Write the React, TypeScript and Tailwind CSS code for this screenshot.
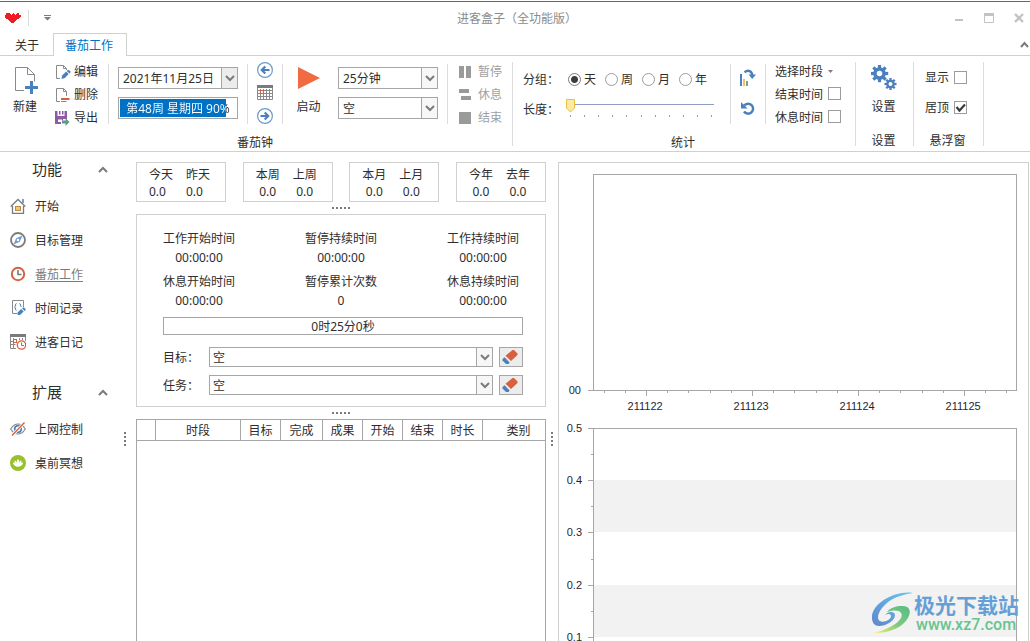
import { useState, type ReactNode } from "react";

const BLUE = "#4a80bb";
const ORANGE = "#d9603f";
const GREY = "#7b7b7b";

function Svg({ w, h, children, className = "" }: { w: number; h: number; children: ReactNode; className?: string }) {
  return (
    <svg width={w} height={h} viewBox={`0 0 ${w} ${h}`} fill="none" aria-hidden="true" className={`shrink-0 ${className}`}>
      {children}
    </svg>
  );
}

/* ---------- icons ---------- */

const HeartLogo = () => (
  <Svg w={16} h={11}>
    <path
      fill="#ee1c25"
      d="M3 1h2v1h1v1h1v-1h1v-1h1v1h1v1h1v-1h1v-1h2v2h2v2h-1v1h-1v1h-2v1h-1v1h-1v1h-1v1h-3v-1h-1v-1h-1v-1h-1v-1h-2v-1h-1v-1h-1v-2h2v-2z"
    />
  </Svg>
);

const Chevron = ({ up = false, w = 10 }: { up?: boolean; w?: number }) => (
  <Svg w={w} h={7}>
    <path
      d={up ? `M1 6 L${w / 2} 2 L${w - 1} 6` : `M1 1 L${w / 2} 5 L${w - 1} 1`}
      stroke={GREY}
      strokeWidth="2"
    />
  </Svg>
);

const NewIcon = () => (
  <Svg w={28} h={28}>
    <path d="M13 23.500H4.500V.5h12l7 7v7M16.500.5v7h7" stroke="#8a8a8a" />
    <path d="M20.500 14v13M14 20.500h13" stroke={BLUE} strokeWidth="3" />
  </Svg>
);

const EditIcon = () => (
  <Svg w={16} h={16}>
    <path d="M5 14.500H1.500V1.500h7l3 3V6M8.500 1.500v3h3" stroke="#8a8a8a" />
    <path d="M6.500 15l.6-3.600 4-3.900 2.600 2.500-3.900 4z" fill={BLUE} />
    <path d="M11.800 6.900l1-.9h1.200l1.400 1.400v1.200l-1 1z" fill={BLUE} />
  </Svg>
);

const DeleteIcon = () => (
  <Svg w={16} h={16}>
    <path d="M5 14.500H1.500V1.500h7l3 3V9M8.500 1.500v3h3M6 14.500h5.500" stroke="#8a8a8a" />
    <path d="M6 12h8.500" stroke={ORANGE} strokeWidth="2" />
  </Svg>
);

const ExportIcon = () => (
  <Svg w={16} h={16}>
    <path fill="#8d5aa9" d="M0 1h2.500v5h7V1H12v8H8v1.500H7V9.500H3V12h3v2H0z M4 1h1.500v3.500H4z M7 1h1.500v3.500H7z" />
    <path fill="#5e9e86" d="M7 10.500h3.500V8L14.500 12l-4 4v-2.500H7z" />
  </Svg>
);

const CircleArrow = ({ left = false }: { left?: boolean }) => (
  <Svg w={16} h={16} className={left ? "" : "rotate-180"}>
    <circle cx="8" cy="8" r="7.400" stroke="#6e9bca" strokeWidth="1.200" />
    <path d="M12.500 8H5M8.300 4.500L4.800 8l3.500 3.500" stroke={BLUE} strokeWidth="2.200" />
  </Svg>
);

const CalendarIcon = () => (
  <Svg w={16} h={15}>
    <path fill="#7b7b7b" d="M0 0h16v3H0z" />
    <path d="M.5 3v11.500h15V3M.5 8.500h15M.5 11.500h15M3.500 4v11M6.500 4v11M9.500 4v11M12.500 4v11M.5 5.500h15" stroke="#8a8a8a" />
    <rect x="3.500" y="5.500" width="3" height="3" fill="#fff" stroke={ORANGE} />
  </Svg>
);

const PlayIcon = () => (
  <Svg w={22} h={22}>
    <path d="M0 0l22 11L0 22z" fill="#f06a42" />
  </Svg>
);

const PauseIcon = () => (
  <Svg w={12} h={12}>
    <path d="M0 0h5v12H0zM7 0h5v12H7z" fill="#9a9a9a" />
  </Svg>
);
const RestIcon = () => (
  <Svg w={12} h={12}>
    <path d="M0 0h10v4H0zM2 7h10v4H2z" fill="#9a9a9a" />
  </Svg>
);
const StopIcon = () => (
  <Svg w={12} h={12}>
    <path d="M0 0h12v12H0z" fill="#9a9a9a" />
  </Svg>
);

const ChartRotateIcon = () => (
  <Svg w={16} h={17}>
    <path d="M1 5v12" stroke={BLUE} strokeWidth="2" />
    <path d="M4 10v7" stroke="#f2c063" strokeWidth="2" />
    <path d="M7 12v5" stroke="#6fa58d" strokeWidth="2" />
    <path d="M4.500 3.300C8 .3 12 2 12.300 6.500" stroke={BLUE} strokeWidth="2.400" />
    <path d="M8.500 5.500H16L12.200 10z" fill={BLUE} />
  </Svg>
);

const UndoIcon = () => (
  <Svg w={14} h={13}>
    <path d="M3.200 3.500A5 5 0 1 1 3 9.500" stroke={BLUE} strokeWidth="2.500" />
    <path d="M0 0v6.500h6.500z" fill={BLUE} />
  </Svg>
);

function Gear({ cx, cy, r, hole, teeth }: { cx: number; cy: number; r: number; hole: number; teeth: number }) {
  return (
    <g transform={`translate(${cx} ${cy})`}>
      {Array.from({ length: 8 }, (_, i) => (
        <rect key={i} x={-teeth / 2} y={-r - teeth * 0.75} width={teeth} height={teeth * 1.5} fill={BLUE} transform={`rotate(${i * 45})`} />
      ))}
      <circle r={(r + hole) / 2} stroke={BLUE} strokeWidth={r - hole} />
    </g>
  );
}

const GearsIcon = () => (
  <Svg w={26} h={26} className="-mt-0.5">
    <Gear cx={8.500} cy={8.500} r={6.300} hole={2.800} teeth={3.200} />
    <Gear cx={19.500} cy={19} r={4.300} hole={2} teeth={2.300} />
  </Svg>
);

const EraserIcon = () => (
  <Svg w={16} h={14}>
    <path d="M10.500 0h1.500l3.500 3.500V5L9 11 3.500 5.800z" fill={ORANGE} />
    <path d="M2.600 7.200l5 5.300L6.500 14H4L.5 10.500V9z" fill={BLUE} />
  </Svg>
);

const HomeIcon = () => (
  <Svg w={16} h={16}>
    <path d="M13 1v4" stroke={BLUE} strokeWidth="1.500" />
    <path d="M.7 8.500L8 1.500l7.300 7M2.500 8v7.500h11V8" stroke="#7b7b7b" strokeWidth="1.300" />
    <rect x="5.500" y="8.500" width="5" height="4" fill="#f3c670" stroke="#b98c4a" />
  </Svg>
);
const CompassIcon = () => (
  <Svg w={16} h={16}>
    <circle cx="8" cy="8" r="7" stroke="#7b7b7b" strokeWidth="1.800" />
    <path d="M12.500 3.500L9.800 9.800 3.500 12.500 6.200 6.200z" fill="#6f9bcb" />
    <circle cx="8" cy="8" r="1.300" fill="#fff" />
  </Svg>
);
const ClockIcon = () => (
  <Svg w={16} h={16}>
    <circle cx="8" cy="8" r="6.200" stroke={ORANGE} strokeWidth="2" />
    <path d="M8 4v4.500h3.500" stroke="#7b7b7b" strokeWidth="1.600" />
  </Svg>
);
const RecordIcon = () => (
  <Svg w={16} h={16}>
    <path d="M7 13.500H2.500V.5h11V7" stroke="#8a8a8a" />
    <path d="M6.500 3.500c-1.500 0-.5 2.800-2 3.500 1.500.7.500 3.500 2 3.500M9.500 3.500c1.500 0 .5 2.800 2 3.500" stroke={BLUE} />
    <path d="M7.500 12.500l3.700-3.500 2.500 2.500L10 15H7.500z" fill={BLUE} />
    <path d="M12 8.300l1-.8h1l1.600 1.500v1l-1 1z" fill={BLUE} />
  </Svg>
);
const DiaryIcon = () => (
  <Svg w={16} h={16}>
    <path d="M0 0h16v3H0z" fill="#7b7b7b" />
    <path d="M.5 3v11.500H6M.5 7.500h5M.5 10.500h5M3.500 4v10.500M9.500 4v2M12.500 4v2M15.500 3v4" stroke="#8a8a8a" />
    <rect x="3.500" y="5.500" width="3" height="3" fill="#fff" stroke={ORANGE} />
    <circle cx="11.500" cy="11" r="4.200" fill="#fff" stroke={ORANGE} strokeWidth="1.300" />
    <path d="M11.500 8.500V11.500H14" stroke="#7b7b7b" />
  </Svg>
);
const EyeOffIcon = () => (
  <Svg w={16} h={14}>
    <path d="M.7 7C3 3.200 5.500 2 8 2s5 1.200 7.300 5C13 10.800 10.500 12 8 12S3 10.800.7 7z" stroke="#8a8a8a" strokeWidth="1.200" />
    <circle cx="8" cy="7" r="3.300" stroke={BLUE} strokeWidth="1.800" />
    <path d="M2 13.500L14.500.5" stroke="#fff" strokeWidth="3" />
    <path d="M2 13.500L14.500.5" stroke={ORANGE} strokeWidth="1.400" />
  </Svg>
);
const LotusIcon = () => (
  <Svg w={16} h={16}>
    <circle cx="8" cy="8" r="8" fill="#97c02c" />
    <path
      d="M8 4c1.300 1.200 1.600 3 1.200 4.500.4-1.500 1-2.500 2-3.200.5 1.200.3 2.300-.1 3.100.6-.7 1.300-1 2-.9-.2 2.500-2.500 4.300-5.100 4.300S3.100 10 2.900 7.500c.7-.1 1.400.2 2 .9-.4-.8-.6-1.900-.1-3.100 1 .7 1.600 1.700 2 3.200C6.400 7 6.700 5.200 8 4z"
      fill="#fff"
    />
  </Svg>
);

/* ---------- building blocks ---------- */

function Combo({ label, value, wide = false, shaded = false }: { label: string; value: string; wide?: boolean; shaded?: boolean }) {
  return (
    <div className={`relative border border-[#a6a6a6] bg-white ${wide ? "h-5 min-w-0 flex-1" : "h-[22px]"}`}>
      <select
        aria-label={label}
        className={`block h-full w-full appearance-none bg-transparent pt-px pr-4 outline-none ${wide ? "pl-[3px]" : "pl-1"}`}
      >
        <option>{value}</option>
      </select>
      <span
        className={`pointer-events-none absolute inset-y-0 right-0 flex w-4 items-center justify-center border-l border-[#a6a6a6] ${
          shaded ? "bg-[#ececec]" : "bg-[#f7f7f7]"
        }`}
      >
        <Chevron />
      </span>
    </div>
  );
}

function Check({ defaultChecked = false, children }: { defaultChecked?: boolean; children: ReactNode }) {
  return (
    <label className="flex items-center gap-[5px]">
      {children}
      <span className="grid pb-0.5">
        <input
          type="checkbox"
          defaultChecked={defaultChecked}
          className="peer col-start-1 row-start-1 size-[13px] appearance-none border border-[#9c9c9c] bg-white"
        />
        <svg
          viewBox="0 0 13 13"
          fill="none"
          aria-hidden="true"
          className="pointer-events-none invisible col-start-1 row-start-1 size-[13px] peer-checked:visible"
        >
          <path d="M2.500 6l3 3.500L11 3.500" stroke="#3c3c3c" strokeWidth="2.200" />
        </svg>
      </span>
    </label>
  );
}

const ShortRule = () => <div className="mt-1 h-[60px] w-px bg-[#dcdcdc]" />;
const TallRule = () => <div className="mt-1.5 h-[84px] w-px bg-[#dcdcdc]" />;

function Group({ title, className = "", children }: { title: string; className?: string; children: ReactNode }) {
  return (
    <section className={`flex flex-col pt-1 ${className}`}>
      <div className="flex h-[69px] items-start">{children}</div>
      <h2 className="mt-1 pr-0.5 text-center leading-5">{title}</h2>
    </section>
  );
}

function SmallButton({ icon, children, disabled = false }: { icon: ReactNode; children: ReactNode; disabled?: boolean }) {
  return (
    <button type="button" disabled={disabled} className="flex h-[23px] items-center disabled:text-[#a0a0a0]">
      {icon}
      <span>{children}</span>
    </button>
  );
}

function BigButton({ icon, children, className = "" }: { icon: ReactNode; children: ReactNode; className?: string }) {
  return (
    <button type="button" className={`flex flex-col items-center pt-[7px] ${className}`}>
      <span className="flex h-[30px] justify-center">{icon}</span>
      <span className="leading-5">{children}</span>
    </button>
  );
}

const Dots = ({ vertical = false }: { vertical?: boolean }) => (
  <div className={`flex items-center justify-center gap-[2px] ${vertical ? "flex-col" : "h-3"}`}>
    {[0, 1, 2, 3, ...(vertical ? [] : [4])].map((i) => (
      <span key={i} className="size-[2px] bg-[#7b7b7b]" />
    ))}
  </div>
);

function LengthSlider() {
  const [value, setValue] = useState(0);
  return (
    <div className="relative h-5 w-[150px]">
      <svg width="150" height="20" fill="none" aria-hidden="true">
        <path d="M4 5.500h144" stroke="#8d9dc4" />
        {Array.from({ length: 11 }, (_, i) => (
          <rect key={i} x={4 + Math.round(i * 14.1)} y="16" width="1" height="2" fill="#8d9dc4" />
        ))}
        <path
          d="M.5 .5h8v8.500l-4 4-4-4z"
          fill="#fbe9a8"
          stroke="#e9bf3b"
          transform={`translate(${value * 14.1} 0)`}
        />
      </svg>
      <input
        id="length"
        type="range"
        min={0}
        max={10}
        value={value}
        onChange={(e) => setValue(Number(e.target.value))}
        className="absolute inset-0 w-full opacity-0"
      />
    </div>
  );
}

/* ---------- ribbon ---------- */

function Ribbon() {
  return (
    <div className="flex h-24 shrink-0 border-b border-[#d0d0d0]">
      <Group title="番茄钟" className="w-[512px]">
        <BigButton icon={<NewIcon />} className="w-[50px]">新建</BigButton>
        <div className="flex w-[58px] flex-col pl-[5px] [&_span]:pl-[3px]">
          <SmallButton icon={<EditIcon />}>编辑</SmallButton>
          <SmallButton icon={<DeleteIcon />}>删除</SmallButton>
          <SmallButton icon={<ExportIcon />}>导出</SmallButton>
        </div>
        <ShortRule />
        <div className="flex w-[138px] flex-col gap-2 pt-[7px] pr-[9px] pl-[9px]">
          <Combo label="日期" value="2021年11月25日" shaded />
          <div
            role="progressbar"
            aria-label="周进度"
            aria-valuenow={90}
            className="h-[22px] border border-[#a6a6a6] bg-white p-px"
          >
            <div className="h-full bg-[linear-gradient(90deg,#0072c6_91%,transparent_91%)]">
              <div className="bg-[linear-gradient(90deg,#fff_91%,#333_91%)] bg-clip-text text-center leading-5 whitespace-nowrap text-transparent">
                第48周 星期四 90%
              </div>
            </div>
          </div>
        </div>
        <ShortRule />
        <div className="flex w-[34px] flex-col items-center">
          <button type="button" aria-label="前一天" className="flex h-[23px] items-start pt-0.5"><CircleArrow left /></button>
          <button type="button" aria-label="日历" className="flex h-[23px] items-start pt-0.5"><CalendarIcon /></button>
          <button type="button" aria-label="后一天" className="flex h-[23px] items-start pt-0.5"><CircleArrow /></button>
        </div>
        <ShortRule />
        <BigButton icon={<PlayIcon />} className="w-[51px]">启动</BigButton>
        <div className="flex w-[113px] flex-col gap-2 pt-[7px] pr-[9px] pl-1">
          <Combo label="时长" value="25分钟" />
          <Combo label="任务" value="空" />
        </div>
        <ShortRule />
        <div className="flex w-[64px] flex-col pl-[11px] [&_span]:pl-[7px]">
          <SmallButton disabled icon={<PauseIcon />}>暂停</SmallButton>
          <SmallButton disabled icon={<RestIcon />}>休息</SmallButton>
          <SmallButton disabled icon={<StopIcon />}>结束</SmallButton>
        </div>
      </Group>
      <TallRule />
      <Group title="统计" className="w-[342px]">
        <div className="flex w-[217px] flex-col gap-3 pt-[9px] pl-[10px] leading-[18px]">
          <fieldset className="flex h-[18px] items-center">
            <legend className="float-left w-[45px] pt-0.5">分组：</legend>
            {["天", "周", "月", "年"].map((unit, i) => (
              <label key={unit} className="flex w-[37px] items-center gap-[3px]">
                <input
                  type="radio"
                  name="unit"
                  defaultChecked={i === 0}
                  className="size-[13px] appearance-none rounded-full border border-[#9c9c9c] bg-white checked:border-[#7b7b7b] checked:bg-[radial-gradient(circle,#3c3c3c_3px,transparent_4px)]"
                />
                <span className="pt-0.5">{unit}</span>
              </label>
            ))}
          </fieldset>
          <div className="flex h-[20px]">
            <label htmlFor="length" className="w-[43px] pt-0.5">长度：</label>
            <LengthSlider />
          </div>
        </div>
        <ShortRule />
        <div className="flex w-[34px] flex-col items-center gap-4 pt-[9px]">
          <button type="button" aria-label="图表刷新"><ChartRotateIcon /></button>
          <button type="button" aria-label="重置"><UndoIcon /></button>
        </div>
        <ShortRule />
        <div className="flex flex-col pl-[9px] [&>*]:h-[23px]">
          <button type="button" className="flex items-center gap-[5px]">
            选择时段
            <Svg w={6} h={4}><path d="M0 0h5L2.500 3z" fill="#7b7b7b" /></Svg>
          </button>
          <Check>结束时间</Check>
          <Check>休息时间</Check>
        </div>
      </Group>
      <TallRule />
      <Group title="设置" className="w-[57px]">
        <BigButton icon={<GearsIcon />} className="w-full pr-0.5">设置</BigButton>
      </Group>
      <TallRule />
      <Group title="悬浮窗" className="w-[69px]">
        <div className="flex flex-col gap-3 pt-[9px] pl-[11px] leading-[18px]">
          <Check>显示</Check>
          <Check defaultChecked>居顶</Check>
        </div>
      </Group>
      <TallRule />
    </div>
  );
}

/* ---------- side navigation ---------- */

function NavSection({ title, items }: { title: string; items: { icon: ReactNode; text: string; active?: boolean }[] }) {
  return (
    <section className="mb-4">
      <button type="button" className="mb-[3px] flex h-[34px] w-full items-center justify-between pr-[14px] pl-[32px] text-[15px]">
        {title}
        <Chevron up />
      </button>
      <ul>
        {items.map((it) => (
          <li key={it.text}>
            <a
              href="#"
              className={`flex h-[34px] items-center gap-[9px] pl-[10px] ${it.active ? "text-[#7b7b7b] underline underline-offset-2" : ""}`}
            >
              {it.icon}
              <span className="pt-0.5">{it.text}</span>
            </a>
          </li>
        ))}
      </ul>
    </section>
  );
}

/* ---------- work panel ---------- */

const totals = [
  ["今天", "昨天"],
  ["本周", "上周"],
  ["本月", "上月"],
  ["今年", "去年"],
];

const timers = [
  ["工作开始时间", "00:00:00"],
  ["暂停持续时间", "00:00:00"],
  ["工作持续时间", "00:00:00"],
  ["休息开始时间", "00:00:00"],
  ["暂停累计次数", "0"],
  ["休息持续时间", "00:00:00"],
];

function WorkPanel() {
  return (
    <div className="flex w-[410px] shrink-0 flex-col pt-[10px]">
      <div className="flex justify-between">
        {totals.map((pair, i) => (
          <dl key={pair[0]} className="flex h-10 w-[90px] gap-[13px] border border-[#d0d0d0] px-3 pt-[3px] leading-[17px]">
            {pair.map((name) => (
              <div key={name} className={`w-6 ${i === 0 ? "" : "text-center"}`}>
                <dt>{name}</dt>
                <dd>0.0</dd>
              </div>
            ))}
          </dl>
        ))}
      </div>
      <Dots />
      <div className="border border-[#d0d0d0] pt-[14px] pr-[22px] pb-[11px] pl-[26px]">
        <dl className="grid grid-cols-[72px_72px_72px] justify-between gap-y-[5px] pr-1 text-center">
          {timers.map(([name, value]) => (
            <div key={name}>
              <dt className="leading-5">{name}</dt>
              <dd className="leading-[18px]">{value}</dd>
            </div>
          ))}
        </dl>
        <div className="mt-[7px] h-[18px] border border-[#a6a6a6] text-center leading-[18px]">0时25分0秒</div>
        <div className="mt-3 flex flex-col gap-2">
          {["目标", "任务"].map((name) => (
            <div key={name} className="flex items-center">
              <span className="w-[46px] pt-0.5">{name}：</span>
              <Combo label={name} value="空" wide />
              <button
                type="button"
                aria-label={`清除${name}`}
                className="ml-1.5 flex h-5 w-6 items-center justify-center border border-[#a6a6a6] bg-[#ececec] pr-0.5"
              >
                <EraserIcon />
              </button>
            </div>
          ))}
        </div>
      </div>
      <Dots />
      <div className="flex-1 overflow-hidden border border-b-0 border-[#a6a6a6]">
        <table className="w-[calc(100%+10px)] table-fixed border-separate border-spacing-0">
          <thead>
            <tr className="[&>th]:h-[21px] [&>th]:border-r [&>th]:border-b [&>th]:border-[#a6a6a6] [&>th]:p-0 [&>th]:pt-0.5 [&>th]:leading-[18px] [&>th]:font-normal">
              <th className="w-[19px]" aria-label="选择" />
              <th className="w-[85px]">时段</th>
              <th className="w-[40px]">目标</th>
              <th className="w-[42px]">完成</th>
              <th className="w-[40px]">成果</th>
              <th className="w-[40px]">开始</th>
              <th className="w-[40px]">结束</th>
              <th className="w-[40px]">时长</th>
              <th>类别</th>
            </tr>
          </thead>
          <tbody />
        </table>
      </div>
    </div>
  );
}

/* ---------- charts ---------- */

const AXIS = "#a6a6a6";
const days = ["211122", "211123", "211124", "211125"];

function DayAxis({ y }: { y: number }) {
  return (
    <>
      {Array.from({ length: 20 }, (_, i) => (
        <rect key={i} x={`${2.5 + i * 5}%`} y={y} width="1" height={i % 5 === 2 ? 5 : 2} fill={AXIS} />
      ))}
      {days.map((d, i) => (
        <text key={d} x={`${12.3 + i * 25}%`} y={y + 19} textAnchor="middle" fill="#1f1f33">
          {d}
        </text>
      ))}
    </>
  );
}

function Frame({ height }: { height: number }) {
  return (
    <>
      <rect width="100%" height="1" fill={AXIS} />
      <rect y={height - 1} width="100%" height="1" fill={AXIS} />
      <rect width="1" height={height} fill={AXIS} />
      <svg x="100%" overflow="visible">
        <rect x="-1" width="1" height={height} fill={AXIS} />
      </svg>
    </>
  );
}

function Charts() {
  const step = 52.2;
  return (
    <div className="mt-[10px] mr-px min-w-0 flex-1 overflow-hidden border border-b-0 border-[#d0d0d0] pt-[11px] pr-[11px] pl-[34px] text-[11px] [font-family:'Liberation_Sans',sans-serif]">
      <svg className="block h-[217px] w-full overflow-visible" shapeRendering="crispEdges" role="img" aria-label="每日时段">
        <Frame height={217} />
        <rect x="-5" y="216" width="5" height="1" fill={AXIS} />
        <text x="-12" y="220" textAnchor="end" fill="#1f1f33">00</text>
        <DayAxis y={217} />
      </svg>
      <svg className="mt-[37px] block h-[262px] w-full overflow-visible" shapeRendering="crispEdges" role="img" aria-label="每日时长">
        <rect y={step} width="100%" height={step} fill="#f2f2f2" />
        <rect y={step * 3} width="100%" height={step} fill="#f2f2f2" />
        <Frame height={262} />
        {["0.5", "0.4", "0.3", "0.2", "0.1"].map((v, i) => (
          <g key={v}>
            <rect x="-5" y={Math.round(i * step)} width="5" height="1" fill={AXIS} />
            <rect x="-2" y={Math.round((i + 0.5) * step)} width="2" height="1" fill={AXIS} />
            <text x="-11" y={Math.round(i * step) + 4} textAnchor="end" fill="#1f1f33">{v}</text>
          </g>
        ))}
      </svg>
    </div>
  );
}

function Watermark() {
  return (
    <div className="absolute right-[11px] bottom-[5px] flex items-center">
      <svg width="43" height="44" viewBox="0 0 43 44" fill="none" aria-hidden="true">
        <defs>
          <linearGradient id="wmBlue" x1="0" y1="1" x2="1" y2="0">
            <stop offset="0" stopColor="#5f86c9" />
            <stop offset="1" stopColor="#66c8f2" />
          </linearGradient>
          <linearGradient id="wmGreen" x1="0" y1="1" x2="1" y2="0">
            <stop offset="0" stopColor="#f4ee6a" />
            <stop offset=".5" stopColor="#7cc97f" />
            <stop offset="1" stopColor="#55bd86" />
          </linearGradient>
        </defs>
        <path
          d="M42 1C24-2 0 12 1 26c0 5 3 8 7 8 7 0 16-5 16-11 0-4-7-4-10 0 4-2 6-1 6 1 0 4-8 7-11 5C4 26 9 15 20 8 27 4 34 2 42 1z"
          fill="url(#wmBlue)"
        />
        <path d="M16 20c4-6 16-7 20-5 7 4 0 17-12 22-7 3-14 4-21 4 11-3 23-8 27-15 3-6-3-10-14-6z" fill="url(#wmGreen)" />
      </svg>
      <div>
        <div className="text-[21px] leading-[22px] font-bold text-[#669fd6] [font-family:'Noto_Sans_CJK_SC',sans-serif]">极光下载站</div>
        <div className="pl-0.5 text-[16px] leading-[20px] font-medium text-[#67c48e] [font-family:Roboto,sans-serif]">www.xz7.com</div>
      </div>
    </div>
  );
}

export default function App() {
  return (
    <div className="relative flex h-screen flex-col overflow-hidden bg-white pt-px text-[12px] text-[#2e2e2e] [font-family:'Noto_Sans','Noto_Sans_CJK_SC',sans-serif]">
      <header className="shrink-0 border-t border-[#666]">
        <div className="grid h-[31px] grid-cols-[1fr_auto_1fr] items-center">
          <div className="flex items-center pl-[5px]">
            <HeartLogo />
            <span className="ml-[7px] h-4 w-px bg-[#dcdcdc]" />
            <button type="button" aria-label="自定义快速访问工具栏" className="ml-[15px]">
              <Svg w={7} h={6}><path d="M0 0h7v1H0zM0 2h7L3.500 5.500z" fill="#7b7b7b" /></Svg>
            </button>
          </div>
          <h1 className="pt-0.5 pl-1 text-[#8c8c8c]">进客盒子（全功能版）</h1>
          <div className="flex items-center justify-end gap-5 pr-[6px]">
            <button type="button" aria-label="最小化"><Svg w={9} h={10}><path d="M0 6h8v2H0z" fill="#c3c3c3" /></Svg></button>
            <button type="button" aria-label="最大化"><Svg w={10} h={10}><path d="M.5 .5h9v9h-9z" stroke="#c3c3c3" /><path d="M0 0h10v3H0z" fill="#c3c3c3" /></Svg></button>
            <button type="button" aria-label="关闭"><Svg w={10} h={10}><path d="M1 1l8 8M9 1L1 9" stroke="#c3c3c3" strokeWidth="2.400" /></Svg></button>
          </div>
        </div>
        <nav className="flex h-[23px] border-b border-[#d0d0d0]">
          <button type="button" className="w-[53px] pt-1 pl-px">关于</button>
          <button type="button" className="-mb-px w-[74px] border border-b-0 border-[#d0d0d0] bg-white pt-0.5 pr-0.5 text-[#0072c6]">番茄工作</button>
          <button type="button" aria-label="折叠功能区" className="mr-px ml-auto"><Chevron up w={9} /></button>
        </nav>
      </header>
      <Ribbon />
      <main className="flex min-h-0 flex-1">
        <aside className="w-[122px] shrink-0">
          <NavSection
            title="功能"
            items={[
              { icon: <HomeIcon />, text: "开始" },
              { icon: <CompassIcon />, text: "目标管理" },
              { icon: <ClockIcon />, text: "番茄工作", active: true },
              { icon: <RecordIcon />, text: "时间记录" },
              { icon: <DiaryIcon />, text: "进客日记" },
            ]}
          />
          <NavSection
            title="扩展"
            items={[
              { icon: <EyeOffIcon />, text: "上网控制" },
              { icon: <LotusIcon />, text: "桌前冥想" },
            ]}
          />
        </aside>
        <div className="flex w-[14px] shrink-0 justify-start pt-[84px] pl-[2px]"><Dots vertical /></div>
        <WorkPanel />
        <div className="flex w-3 shrink-0 justify-center pt-[84px]"><Dots vertical /></div>
        <Charts />
      </main>
      <Watermark />
    </div>
  );
}
